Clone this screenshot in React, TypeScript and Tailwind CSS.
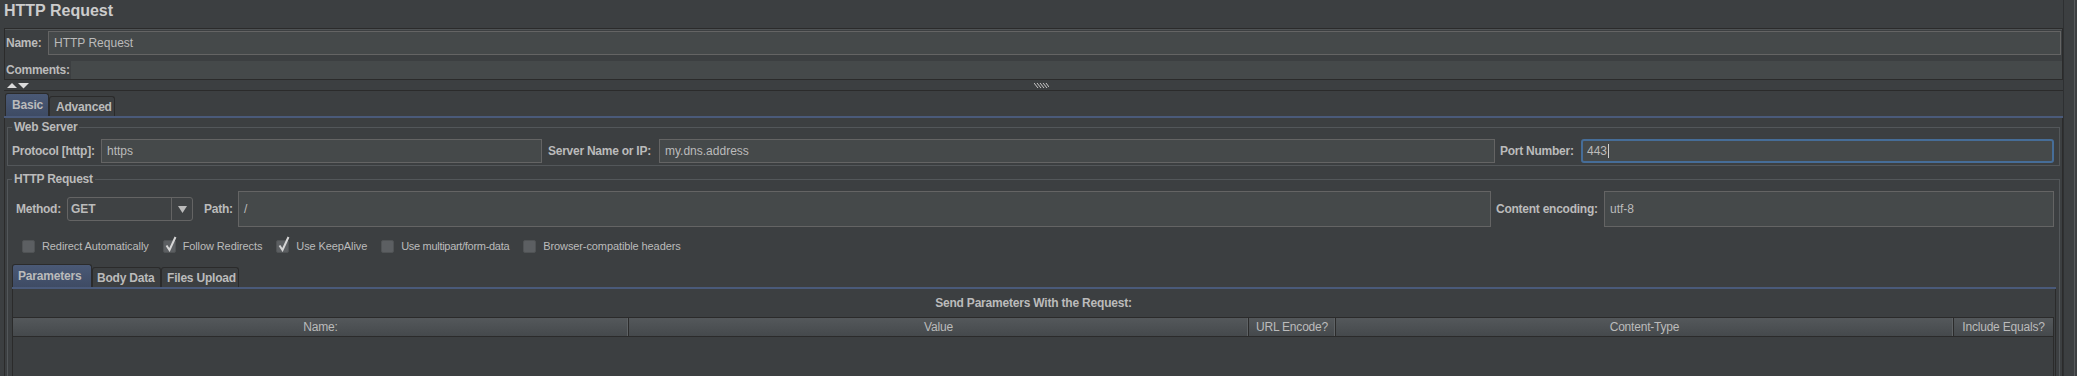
import type React from "react"

const label = "text-[12px] font-bold tracking-[-0.25px] leading-[14px] whitespace-nowrap"

function Field({ value, className = "", tall = false }: { value?: string; className?: string; tall?: boolean }) {
  return (
    <div
      className={`flex items-center border border-[#646464] bg-[#45494a] pl-[5px] text-[12px] text-[#bbbbbb] ${
        tall ? "h-[36px]" : "h-[24px]"
      } ${className}`}
    >
      {value}
    </div>
  )
}

function Check({ text, checked = false, tight = false }: { text: string; checked?: boolean; tight?: boolean }) {
  return (
    <div
      className={`flex items-center gap-[7px] text-[11px] whitespace-nowrap ${
        tight ? "tracking-[-0.3px]" : "tracking-[-0.1px]"
      }`}
    >
      <span className="relative h-[13px] w-[13px] rounded-[2px] border border-[#505355] bg-[#5c5f62]">
        {checked && (
          <svg className="absolute left-[1px] top-[-5px]" width="12" height="16" viewBox="0 0 12 16">
            <path d="M1.5 9.5 L4.5 14 L10.5 1" stroke="#d6d6d6" strokeWidth="2" fill="none" />
          </svg>
        )}
      </span>
      <span>{text}</span>
    </div>
  )
}

function Tab({ text, active = false, className = "" }: { text: string; active?: boolean; className?: string }) {
  return (
    <div
      className={`flex items-center rounded-t-[3px] border border-b-0 border-[#2b2b2b] text-[12px] font-bold tracking-[-0.2px] ${
        active ? "h-[23px] bg-gradient-to-b from-[#4a5976] to-[#3e4b64]" : "h-[20px] bg-[#3c3f41]"
      } ${className}`}
    >
      {text}
    </div>
  )
}

function HeaderCell({ text, className = "" }: { text: string; className?: string }) {
  return (
    <div className={`flex items-center justify-center border-r border-[#2b2b2b] shadow-[inset_-1px_0_0_#5e6265] ${className}`}>
      {text}
    </div>
  )
}

export default function App() {
  return (
    <div className="flex h-[376px] w-[2077px] items-start overflow-hidden bg-[#3c3f41] font-['Liberation_Sans',Arial,sans-serif] text-[#bbbbbb]">
      <div className="flex w-[2063px] shrink-0 flex-col">
        {/* title */}
        <div className="h-[28px] shrink-0 pl-[4px] pt-[1px] text-[16px] font-bold leading-[20px] text-[#cccccc]">HTTP Request</div>

        {/* name + comments */}
        <div className="ml-[4px] h-[52px] shrink-0 border border-[#2b2b2b] shadow-[inset_0_1px_0_#4f5355]">
          <div className="flex items-center pt-[2px] pr-[1px]">
            <div className={`${label} w-[43px] pl-[1px]`}>Name:</div>
            <Field value="HTTP Request" className="flex-1" />
          </div>
          <div className="mt-[6px] flex h-[18px] items-center">
            <div className={`${label} w-[66px] pl-[1px]`}>Comments:</div>
            <div className="h-[18px] flex-1 bg-[#45494a]" />
          </div>
        </div>

        {/* splitter */}
        <div className="flex h-[10px] shrink-0 items-center">
          <svg className="ml-[6px]" width="24" height="7" viewBox="0 0 24 7">
            <polygon points="1,6 6,1 11,6" fill="#dcdcdc" />
            <polygon points="12,1 23,1 17.5,6.5" fill="#dcdcdc" />
          </svg>
          <div className="flex flex-1 justify-center pr-[10px]">
            <svg width="15" height="5" viewBox="0 0 15 5">
              <path d="M0 0 L4 5 M3 0 L7 5 M6 0 L10 5 M9 0 L13 5 M12 0 L15 4" stroke="#c8c8c8" strokeWidth="1" />
            </svg>
          </div>
        </div>
        <div className="ml-[4px] h-[1px] shrink-0 bg-[#2b2b2b]" />

        {/* basic / advanced tabs */}
        <div className="flex h-[25px] shrink-0 items-end pl-[5px]">
          <Tab text="Basic" active className="w-[44px] pl-[6px]" />
          <Tab text="Advanced" className="w-[66px] pl-[6px]" />
        </div>
        <div className="ml-[4px] h-[2px] shrink-0 bg-[#4a5a7a]" />

        <div className="ml-[4px] border-x border-[#2b2b2b] px-[2px] pt-[2px]">
          {/* web server */}
          <fieldset className="min-w-0 border border-[#53575a] pb-[2px]">
            <legend className={`${label} ml-[4px] px-[2px]`}>Web Server</legend>
            <div className="flex items-center pt-[5px] pl-[4px] pr-[5px]">
              <div className={`${label} w-[89px]`}>Protocol [http]:</div>
              <Field value="https" className="w-[441px]" />
              <div className={`${label} w-[117px] pl-[6px]`}>Server Name or IP:</div>
              <Field value="my.dns.address" className="w-[836px]" />
              <div className={`${label} w-[86px] pl-[5px]`}>Port Number:</div>
              <div className="flex h-[24px] flex-1 items-center rounded-[3px] border-2 border-[#466d98] bg-[#45494a] pl-[4px] text-[12px]">
                443
                <span className="ml-[1px] h-[14px] w-[1px] bg-[#cfcfcf]" />
              </div>
            </div>
          </fieldset>

          {/* http request */}
          <fieldset className="mt-[6px] min-w-0 border border-[#53575a]">
            <legend className={`${label} ml-[4px] px-[2px]`}>HTTP Request</legend>
            <div className="flex h-[41px] items-end pl-[8px] pr-[5px]">
              <div className="flex h-[36px] w-full items-center">
                <div className={`${label} w-[51px]`}>Method:</div>
                <div className="flex h-[24px] w-[126px] rounded-[3px] border border-[#646464] bg-[#3f4244]">
                  <span className="flex-1 pl-[3px] text-[12px] font-bold leading-[22px]">GET</span>
                  <span className="flex w-[21px] items-center justify-center border-l border-[#646464]">
                    <svg width="9" height="7" viewBox="0 0 9 7">
                      <polygon points="0,0 9,0 4.5,7" fill="#bbbbbb" />
                    </svg>
                  </span>
                </div>
                <div className={`${label} w-[45px] pl-[11px]`}>Path:</div>
                <Field value="/" tall className="w-[1253px]" />
                <div className={`${label} w-[113px] pl-[5px]`}>Content encoding:</div>
                <Field value="utf-8" tall className="flex-1" />
              </div>
            </div>

            <div className="mt-[9px] flex h-[20px] items-center gap-[14px] pl-[14px]">
              <Check text="Redirect Automatically" />
              <Check text="Follow Redirects" checked />
              <Check text="Use KeepAlive" checked />
              <Check text="Use multipart/form-data" tight />
              <Check text="Browser-compatible headers" />
            </div>

            {/* parameters tabs */}
            <div className="ml-[4px] mr-[3px] mt-[8px]">
              <div className="flex h-[23px] items-end">
                <Tab text="Parameters" active className="w-[80px] pl-[5px]" />
                <Tab text="Body Data" className="w-[69px] pl-[4px]" />
                <Tab text="Files Upload" className="w-[78px] pl-[5px]" />
              </div>
              <div className="h-[2px] bg-[#4a5a7a]" />
              <div className="border-x border-[#2b2b2b] pr-[1px]">
                <div className="flex h-[28px] items-center justify-center text-[12px] font-bold tracking-[-0.2px]">
                  Send Parameters With the Request:
                </div>
                <div className="border-r border-[#2b2b2b]">
                  <div className="flex h-[20px] border-y border-[#2b2b2b] bg-gradient-to-b from-[#54585b] to-[#45494c] text-[12px] tracking-[-0.2px]">
                    <HeaderCell text="Name:" className="w-[616px]" />
                    <HeaderCell text="Value" className="w-[620px]" />
                    <HeaderCell text="URL Encode?" className="w-[87px]" />
                    <HeaderCell text="Content-Type" className="w-[618px]" />
                    <HeaderCell text="Include Equals?" className="flex-1 border-r-0 shadow-none" />
                  </div>
                  <div className="h-[80px]" />
                </div>
              </div>
            </div>
          </fieldset>
        </div>
      </div>

      {/* right edge */}
      <div className="flex w-[14px] self-stretch border-l border-[#2e3032]">
        <div className="w-[10px]" />
        <div className="w-[1px] bg-[#575a5c]" />
      </div>
    </div>
  )
}
